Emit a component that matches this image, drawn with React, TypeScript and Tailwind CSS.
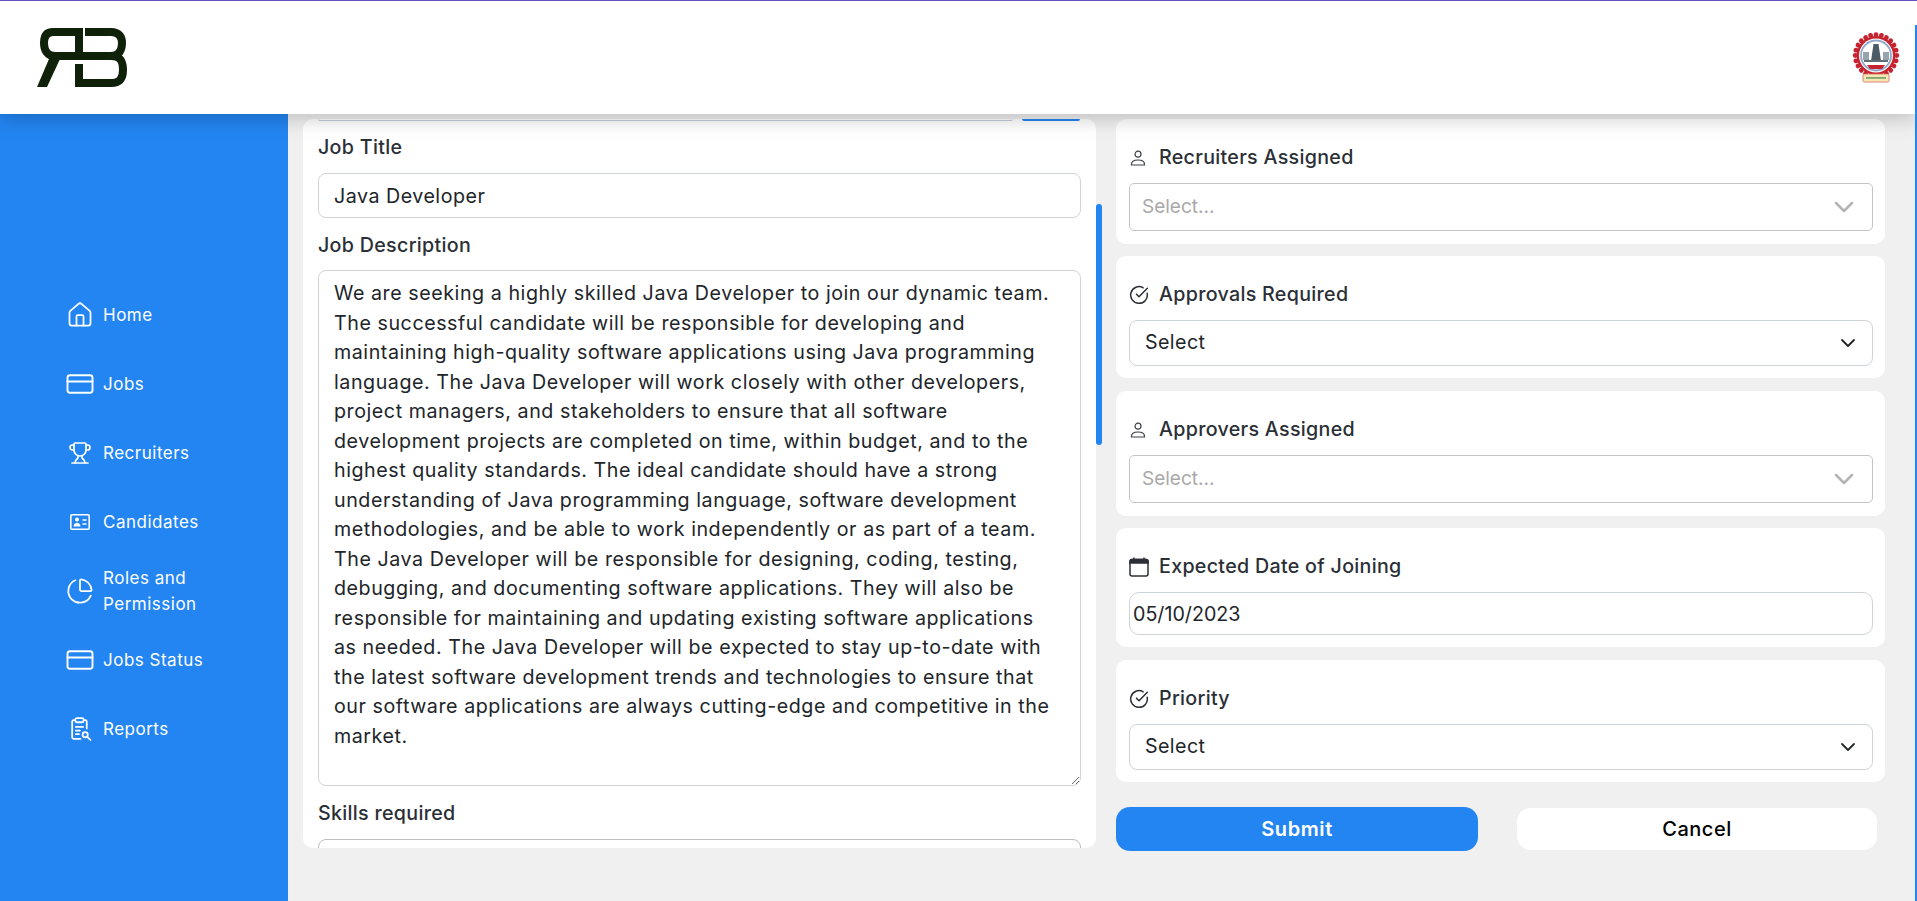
import { House, CreditCard, Trophy, PieChart, ChevronDown, CircleCheckBig } from 'lucide-react';

const font = { fontFamily: '"Inter", "Open Sans", sans-serif' };

const description =
  'We are seeking a highly skilled Java Developer to join our dynamic team.\nThe successful candidate will be responsible for developing and\nmaintaining high-quality software applications using Java programming\nlanguage. The Java Developer will work closely with other developers,\nproject managers, and stakeholders to ensure that all software\ndevelopment projects are completed on time, within budget, and to the\nhighest quality standards. The ideal candidate should have a strong\nunderstanding of Java programming language, software development\nmethodologies, and be able to work independently or as part of a team.\nThe Java Developer will be responsible for designing, coding, testing,\ndebugging, and documenting software applications. They will also be\nresponsible for maintaining and updating existing software applications\nas needed. The Java Developer will be expected to stay up-to-date with\nthe latest software development trends and technologies to ensure that\nour software applications are always cutting-edge and competitive in the\nmarket.';

function ContactIcon() {
  return (
    <svg width="22" height="22" viewBox="0 0 22 22" fill="none" stroke="currentColor" strokeWidth="1.6">
      <rect x="1.800" y="3.800" width="18.400" height="14.400" rx="1.2" />
      <circle cx="8" cy="8.500" r="2" fill="currentColor" stroke="none" />
      <path d="M4.500 15.500c.2-2.500 1.800-3.700 3.500-3.700s3.300 1.200 3.500 3.700z" fill="currentColor" stroke="none" />
      <path d="M13.500 9h4M13.500 13h4" />
    </svg>
  );
}

function ReportIcon() {
  return (
    <svg width="25" height="25" viewBox="0 0 24 24" fill="none" stroke="currentColor" strokeWidth="1.7" strokeLinecap="round">
      <path d="M7 4H5.500A1.500 1.500 0 0 0 4 5.500v15A1.500 1.500 0 0 0 5.500 22H12" />
      <path d="M15 4h1.500A1.500 1.500 0 0 1 18 5.500V12" />
      <rect x="7" y="2" width="8" height="4" rx="1.500" />
      <path d="M7.500 10.500h7M7.500 14h4M7.500 17.500h3" />
      <circle cx="16.500" cy="18" r="2.500" />
      <path d="m18.500 20 3 3" />
    </svg>
  );
}

function UserIcon() {
  return (
    <svg width="16" height="16" viewBox="0 0 16 16" fill="none" stroke="#3a3f45" strokeWidth="1.200" className="ml-[1px]">
      <circle cx="8" cy="4.200" r="3" />
      <path d="M1.500 15v-.800c0-2.800 3-4.200 6.500-4.200s6.500 1.400 6.500 4.200v.800z" />
    </svg>
  );
}

function CalendarIcon() {
  return (
    <svg width="20" height="20" viewBox="0 0 20 20" fill="none" stroke="#2b2f36" strokeWidth="1.500">
      <rect x="1" y="2.500" width="18" height="16.500" rx="2" />
      <path d="M1 4.500a2 2 0 0 1 2-2h14a2 2 0 0 1 2 2V6H1z" fill="#2b2f36" />
      <path d="M5 .500v3M15 .500v3" />
    </svg>
  );
}

// RB logo, the R is mirrored into the B
function Logo() {
  return (
    <svg width="92" height="60" viewBox="0 0 92 60" fill="none" stroke="#0f2108" strokeWidth="8">
      <path d="M46 4H16C9 4 7 9 7 15c0 7 3 13 11 13h56" />
      <path d="M12 31h11L10 59H0z" fill="#0f2108" stroke="none" />
      <path d="M42 0v24" />
      <path d="M48 4h26c8 0 11 5 11 11 0 7-3 13-11 13 10 0 12 6 12 14 0 8-3 13-12 13H42V36" />
    </svg>
  );
}

function CollegeEmblem() {
  const teeth = Array.from({ length: 24 }, (_, i) => i * 15);
  return (
    <svg width="48" height="51" viewBox="0 0 48 51">
      {teeth.map(a => (
        <circle key={a} cx="24" cy="2.700" r="2.400" fill="#c4232f" transform={`rotate(${a} 24 23.500)`} />
      ))}
      <circle cx="24" cy="23.500" r="19.500" fill="#c4232f" />
      <circle cx="24" cy="23.500" r="17" fill="#fff" />
      <circle cx="24" cy="23.500" r="15" fill="none" stroke="#8fa8c8" strokeWidth="1.800" />
      <path d="M21.500 12h5l2.500 17H19z" fill="#4a5a66" />
      <rect x="11" y="20" width="6" height="8" fill="#97a3ad" />
      <rect x="31" y="20" width="6" height="8" fill="#97a3ad" />
      <rect x="12" y="28" width="24" height="2" fill="#5f6d78" />
      <path d="M15 33h18l-3 4H18z" fill="#c4232f" />
      <rect x="11" y="42" width="26" height="8" rx="1.500" fill="#f6e7b4" stroke="#d86a5c" strokeWidth=".8" />
      <rect x="14" y="45" width="20" height="1.800" fill="#7ba86f" />
    </svg>
  );
}

const navItems = [
  { label: 'Home', icon: <House size={28} strokeWidth={1.5} /> },
  { label: 'Jobs', icon: <CreditCard size={30} strokeWidth={1.5} /> },
  { label: 'Recruiters', icon: <Trophy size={24} strokeWidth={1.7} /> },
  { label: 'Candidates', icon: <ContactIcon /> },
  { label: 'Roles and Permission', icon: <PieChart size={28} strokeWidth={1.5} /> },
  { label: 'Jobs Status', icon: <CreditCard size={30} strokeWidth={1.5} /> },
  { label: 'Reports', icon: <ReportIcon /> },
];

function Sidebar() {
  return (
    <aside className="w-[288px] shrink-0 bg-[#2385f2] pt-[166px] text-white">
      {navItems.map(item => (
        <div key={item.label} className="flex h-[69px] items-center">
          <div className="flex w-[103px] shrink-0 justify-center pl-[64px] pr-[7px]">{item.icon}</div>
          <span className="w-[115px] text-[17px] leading-[26px] tracking-[0.5px]">{item.label}</span>
        </div>
      ))}
    </aside>
  );
}

function SelectBox({ placeholder }: { placeholder?: boolean }) {
  if (placeholder) {
    return (
      <div className="flex h-[48px] items-center justify-between rounded-[5px] border border-[#c4c4c8] pl-[12px] pr-[12px]">
        <span className="text-[19px] text-[#a9a9a9]">Select...</span>
        <ChevronDown size={32} strokeWidth={1.9} className="text-[#b3b3b3]" />
      </div>
    );
  }
  return (
    <div className="flex h-[46px] items-center justify-between rounded-[8px] border border-[#ced4da] pl-[15px] pr-[12px]">
      <span className="text-[19.66px] tracking-[0.4px] text-[#212529]">Select</span>
      <ChevronDown size={24} strokeWidth={1.8} className="text-[#212529]" />
    </div>
  );
}

function FieldCard({ icon, label, className, children }: { icon: React.ReactNode; label: string; className: string; children: React.ReactNode }) {
  return (
    <div className={`rounded-[10px] bg-white pl-[13px] pr-[12px] pt-[25px] ${className}`}>
      <div className="mb-[12px] flex items-center text-[#2b2f36]">
        <div className="flex w-[30px] shrink-0 items-center">{icon}</div>
        <span className="text-[19.66px] font-medium leading-[27px] tracking-[0.3px]">{label}</span>
      </div>
      {children}
    </div>
  );
}

export default function App() {
  return (
    <div className="relative flex h-[901px] flex-col overflow-hidden bg-[#f0f0f0] text-[#212529]" style={font}>
      <header className="relative z-10 flex h-[114px] shrink-0 items-center justify-between border-t border-[#6a4fc0] bg-white pl-[37px] pr-[17px] shadow-[0_4px_20px_rgba(0,0,0,0.22)]">
        <Logo />
        <CollegeEmblem />
      </header>

      <div className="flex min-h-0 flex-1">
        <Sidebar />

        <main className="flex min-w-0 flex-1 pl-[15px] pt-[5px]">
          <div className="h-[729px] w-[793px] shrink-0 overflow-hidden rounded-[10px] bg-white pl-[15px] pr-[15px]">
            <div className="flex h-[2px] gap-[9px]">
              <div className="flex-1 rounded-b-[6px] border-b border-[#c5cbdb]" />
              <div className="mr-[1px] w-[58px] rounded-b-[6px] bg-[#2385f2]" />
            </div>
            <label className="mt-[13px] block text-[19.66px] font-medium leading-[27px] tracking-[0.3px] text-[#2b2f36]">Job Title</label>
            <input
              readOnly
              value="Java Developer"
              className="mt-[12px] block h-[45px] w-full rounded-[8px] border border-[#ced4da] px-[15px] text-[19.66px] tracking-[0.5px] outline-none"
            />
            <label className="mt-[14px] block text-[19.66px] font-medium leading-[27px] tracking-[0.3px] text-[#2b2f36]">Job Description</label>
            <textarea
              readOnly
              defaultValue={description}
              className="mt-[11px] block h-[516px] w-full overflow-hidden whitespace-pre rounded-[8px] border border-[#ced4da] px-[15px] py-[8px] text-[19.66px] leading-[29.5px] tracking-[0.55px] outline-none"
            />
            <label className="mt-[14px] block text-[19.66px] font-medium leading-[27px] tracking-[0.3px] text-[#2b2f36]">Skills required</label>
            <div className="mt-[12px] h-[46px] rounded-[8px] border border-[#bdbdbd]" />
          </div>

          <div className="w-[20px] shrink-0">
            <div className="mt-[85px] h-[241px] w-[6px] rounded-[3px] bg-[#2385f2]" />
          </div>

          <div className="flex w-[769px] shrink-0 flex-col">
            <FieldCard className="h-[125px]" icon={<UserIcon />} label="Recruiters Assigned">
              <SelectBox placeholder />
            </FieldCard>
            <FieldCard className="mt-[12px] h-[122px]" icon={<CircleCheckBig size={20} strokeWidth={1.8} />} label="Approvals Required">
              <SelectBox />
            </FieldCard>
            <FieldCard className="mt-[13px] h-[125px]" icon={<UserIcon />} label="Approvers Assigned">
              <SelectBox placeholder />
            </FieldCard>
            <FieldCard className="mt-[12px] h-[119px]" icon={<CalendarIcon />} label="Expected Date of Joining">
              <input
                readOnly
                value="05/10/2023"
                className="block h-[43px] w-full rounded-[10px] border border-[#ced4da] px-[3px] text-[19.66px] outline-none"
              />
            </FieldCard>
            <FieldCard className="mt-[13px] h-[122px]" icon={<CircleCheckBig size={20} strokeWidth={1.8} />} label="Priority">
              <SelectBox />
            </FieldCard>

            <div className="mt-[25px] flex items-center">
              <button className="h-[44px] w-[362px] rounded-[14px] bg-[#2385f2] text-[20px] font-semibold tracking-[0.6px] text-white">Submit</button>
              <button className="ml-[39px] h-[42px] w-[360px] rounded-[14px] bg-white text-[20px] font-medium tracking-[0.5px] text-black">Cancel</button>
            </div>
          </div>
        </main>
      </div>

      {/* thin window edge on the right, sits over the header too */}
      <div className="absolute bottom-0 right-0 top-[25px] z-20 w-[2px] bg-[#2385f2]" />
    </div>
  );
}
